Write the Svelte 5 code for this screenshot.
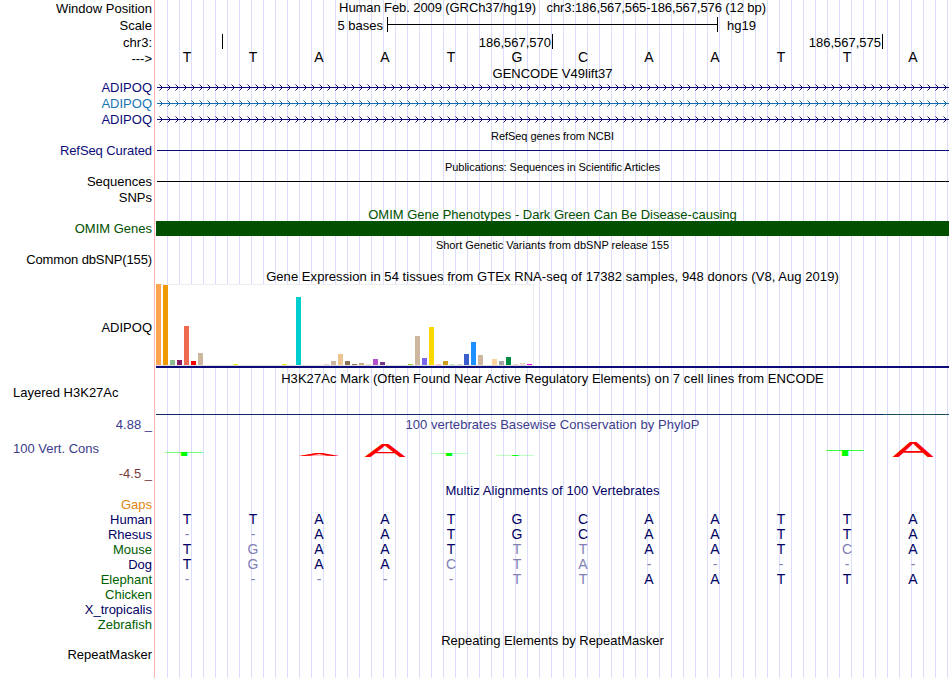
<script lang="ts">
  interface Row {
    kind: string;
    height: number;
    label?: string;
    labelColor?: string;
    labelBase?: number;
    labelTracking?: number;
    left?: boolean;
    title?: string;
    titleColor?: string;
    titleBase?: number;
    small?: boolean;
    tracking?: number;
    color?: string;
    bases?: string;
    ref?: string;
  }

  const NAVY = "#0c0c78";
  const GREEN = "#005000";
  const ALIGN = "#000064";
  const human = "TTAATGCAATTA";

  const header: Row[] = [
    {
      kind: "title",
      height: 16,
      label: "Window Position",
      labelBase: 13.5,
      title: "Human Feb. 2009 (GRCh37/hg19)   chr3:186,567,565-186,567,576 (12 bp)",
      titleBase: 12.5,
      tracking: -0.09,
    },
    { kind: "scale", height: 18, label: "Scale", labelBase: 14.5 },
    { kind: "ruler", height: 17, label: "chr3:", labelBase: 13.5 },
    { kind: "bases", height: 15, label: "--->", labelBase: 12, bases: human, ref: human, color: "#000" },
  ];

  const tracks: Row[] = [
    { kind: "title", height: 14, title: "GENCODE V49lift37", titleBase: 12 },
    { kind: "gene", height: 16, label: "ADIPOQ", labelColor: NAVY, color: NAVY, labelBase: 12 },
    { kind: "gene", height: 16, label: "ADIPOQ", labelColor: "#1874b4", color: "#1470b0", labelBase: 12 },
    { kind: "gene", height: 16, label: "ADIPOQ", labelColor: NAVY, color: NAVY, labelBase: 12 },
    { kind: "title", height: 15, title: "RefSeq genes from NCBI", titleBase: 12, small: true, tracking: -0.05 },
    {
      kind: "line",
      height: 15,
      label: "RefSeq Curated",
      labelColor: NAVY,
      color: NAVY,
      labelBase: 12,
      labelTracking: -0.08,
    },
    {
      kind: "title",
      height: 16,
      title: "Publications: Sequences in Scientific Articles",
      titleBase: 13,
      small: true,
      tracking: -0.06,
    },
    { kind: "line", height: 15, label: "Sequences", color: "#000", labelBase: 12 },
    { kind: "title", height: 16, label: "SNPs", labelBase: 13.5 },
    {
      kind: "title",
      height: 16,
      title: "OMIM Gene Phenotypes - Dark Green Can Be Disease-causing",
      titleColor: GREEN,
      titleBase: 14.5,
    },
    { kind: "block", height: 15, label: "OMIM Genes", labelColor: GREEN, color: GREEN, labelBase: 12 },
    { kind: "title", height: 16, title: "Short Genetic Variants from dbSNP release 155", titleBase: 13, small: true },
    { kind: "title", height: 15, label: "Common dbSNP(155)", labelBase: 12, labelTracking: -0.12 },
    {
      kind: "title",
      height: 17,
      title: "Gene Expression in 54 tissues from GTEx RNA-seq of 17382 samples, 948 donors (V8, Aug 2019)",
      titleBase: 14.5,
      tracking: 0.06,
    },
    { kind: "gtex", height: 84, label: "ADIPOQ", labelBase: 48.5 },
    {
      kind: "title",
      height: 18,
      title: "H3K27Ac Mark (Often Found Near Active Regulatory Elements) on 7 cell lines from ENCODE",
      titleBase: 15.5,
      tracking: 0.06,
    },
    { kind: "wiggle", height: 29, label: "Layered H3K27Ac", labelBase: 11, left: true },
    { kind: "phylop", height: 68 },
    {
      kind: "title",
      height: 14,
      title: "Multiz Alignments of 100 Vertebrates",
      titleColor: ALIGN,
      titleBase: 12,
      tracking: 0.09,
    },
    { kind: "title", height: 15, label: "Gaps", labelColor: "#e08410", labelBase: 12 },
    ...[
      ["Human", human],
      ["Rhesus", "--AATGCAATTA"],
      ["Mouse", "TGAATTTAATCA"],
      ["Dog", "TGAACTA-----"],
      ["Elephant", "-----TTAATTA"],
      ["Chicken", ""],
      ["X_tropicalis", ""],
      ["Zebrafish", ""],
    ].map(([label, bases]) => ({
      kind: "bases",
      height: 15,
      label,
      labelColor: ["Mouse", "Elephant", "Chicken", "Zebrafish"].includes(label) ? "#006000" : ALIGN,
      labelBase: 12,
      bases,
      ref: human,
      color: ALIGN,
    })),
    { kind: "title", height: 15, title: "Repeating Elements by RepeatMasker", titleBase: 13.5 },
    { kind: "title", height: 31, label: "RepeatMasker", labelBase: 12 },
  ];

  const rows = [...header, ...tracks];

  // one entry per tissue: [height, colour]
  const none: [number, string] = [0, "#fff"];
  const tissues: [number, string][] = [
    [81, "#ffa54f"], [80, "#ee9a00"], [5, "#8fbc8f"], [5, "#8b1c62"],
    [39, "#ee6a50"], [4, "#ff0000"], [12, "#cdb79e"], none, none, none, none,
    [1, "#eeee00"], none, none, none, none, none, none, [1, "#eeee00"], none,
    [68, "#00cdcd"], none, none, none, [1, "#e0d0d8"], [4, "#cdb79e"],
    [11, "#eec591"], [4, "#8b7355"], [1, "#8b7355"], [2, "#cdaa7d"],
    [1, "#eed5d2"], [6, "#b452cd"], [3, "#7a378b"], none, none, none,
    [1, "#9acd32"], [29, "#cdb79e"], [7, "#7a67ee"], [38, "#ffd700"],
    [1, "#ffb6c1"], [4, "#cd9b1d"], [1, "#b4eeb4"], [1, "#d9d9d9"],
    [11, "#3a5fcd"], [23, "#1e90ff"], [10, "#cdb79e"], none, [6, "#ffd39b"],
    [4, "#a6a6a6"], [8, "#008b45"], [1, "#eed5d2"], [2, "#eed5d2"], [1, "#ff00ff"],
  ];

  // conservation logo letters, stretched to their score
  const logo = [
    { base: "T", x: 28, top: 37, h: 4, w: 38, color: "#00ff00" },
    { base: "A", x: 163, top: 39, h: 2, w: 41, color: "#ff0000" },
    { base: "A", x: 229, top: 29, h: 13, w: 41, color: "#ff0000" },
    { base: "T", x: 293, top: 39, h: 2, w: 38, color: "#00ff00" },
    { base: "T", x: 359, top: 40, h: 1.1, w: 38, color: "#00ff00" },
    { base: "T", x: 689, top: 35, h: 6, w: 38, color: "#00ff00" },
    { base: "A", x: 757, top: 27, h: 15, w: 41, color: "#ff0000" },
  ];

  function logoTransform(l: (typeof logo)[number]): string {
    const em = l.base === "A" ? 0.664 : 0.57;
    return `translate(${l.x} ${l.top + l.h}) scale(${l.w / em / 20} ${l.h / 0.688 / 20})`;
  }

  const chevrons = Array.from({ length: 99 }, (_, i) => `M${3.5 + i * 8} 4.5l3 3l-3 3`).join("");

  // line box height that puts the text baseline at the given offset
  function lineHeight(base: number, size = 13): number {
    return 2 * (base - size * 0.3465);
  }
</script>

<main class="browser">
  {#each rows as row}
    <div class="row" style:height="{row.height}px">
      {#if row.kind === "phylop"}
        <div class="label axis">
          <span class="upper">4.88 _</span>
          <span class="name">100 Vert. Cons</span>
          <span class="lower">-4.5 _</span>
        </div>
      {:else}
        <div
          class="label"
          class:left={row.left}
          style:color={row.labelColor}
          style:letter-spacing="{row.labelTracking ?? 0}px"
          style:line-height="{lineHeight(row.labelBase ?? 12)}px"
        >
          {row.label ?? ""}
        </div>
      {/if}

      <div class="plot">
        {#if row.kind === "title"}
          <div
            class="title"
            class:small={row.small}
            style:color={row.titleColor}
            style:letter-spacing="{row.tracking ?? 0}px"
            style:line-height="{lineHeight(row.titleBase ?? 12, row.small ? 11 : 13)}px"
          >
            {row.title ?? ""}
          </div>
        {:else if row.kind === "scale"}
          <div class="scale">
            <span class="size">5 bases</span>
            <span class="bar"></span>
            <span>hg19</span>
          </div>
        {:else if row.kind === "ruler"}
          <div class="ruler">
            <span></span>
            <span>186,567,570</span>
            <span>186,567,575</span>
          </div>
        {:else if row.kind === "bases"}
          <div class="bases" class:top={row.color === "#000"} style:color={row.color}>
            {#each (row.bases ?? "").split("") as base, i}
              <span class:diff={base !== row.ref?.[i]}>{base}</span>
            {/each}
          </div>
        {:else if row.kind === "gene"}
          <svg width="793" height="16" style:color={row.color}>
            <path d="M1 7.5H793" stroke="currentColor" shape-rendering="crispEdges" />
            <path d={chevrons} fill="none" stroke="currentColor" stroke-width="1" />
          </svg>
        {:else if row.kind === "line"}
          <div class="line" style:background={row.color}></div>
        {:else if row.kind === "block"}
          <div class="block" style:background={row.color}></div>
        {:else if row.kind === "gtex"}
          <div class="gtex">
            {#each tissues as [h, color]}
              <span style:height="{h}px" style:background={color}></span>
            {/each}
          </div>
          <div class="model"></div>
        {:else if row.kind === "wiggle"}
          <div class="wiggle"></div>
        {:else if row.kind === "phylop"}
          <div class="phylop">
            <div class="title">100 vertebrates Basewise Conservation by PhyloP</div>
            <svg width="793" height="68">
              {#each logo as l}
                <text transform={logoTransform(l)} text-anchor="middle" font-size="20" fill={l.color}>{l.base}</text>
              {/each}
            </svg>
          </div>
        {/if}
      </div>
    </div>
  {/each}
</main>

<style>
  :global(body) {
    margin: 0;
    background: #fff;
  }

  .browser {
    width: 949px;
    height: 678px;
    overflow: hidden;
    font-family: "Liberation Sans", Arial, Helvetica, sans-serif;
    font-size: 13px;
    color: #000;
    background:
      linear-gradient(#ffb4b4, #ffb4b4) 154px 0 / 1px 100% no-repeat,
      repeating-linear-gradient(90deg, #dcdcff 0 1px, transparent 1px 12px) 167px 0 / 782px 100% no-repeat;
  }

  .row {
    display: grid;
    grid-template-columns: 152px 793px;
    column-gap: 4px;
  }

  .label {
    text-align: right;
    white-space: pre;
  }

  .label.left {
    padding-left: 13px;
    text-align: left;
  }

  .axis {
    display: flex;
    flex-direction: column;
    gap: 10px;
    line-height: 15px;
    padding-top: 2px;
  }

  .upper {
    color: #3c3c8c;
  }

  .name {
    margin-top: -1px;
    padding-left: 13px;
    text-align: left;
    color: #3c3c8c;
  }

  .lower {
    color: #783c3c;
  }

  .title {
    text-align: center;
    white-space: pre;
  }

  .title.small {
    font-size: 11px;
  }

  .scale {
    display: flex;
    line-height: 19px;
  }

  .size {
    width: 227px;
    margin-right: 4px;
    text-align: right;
  }

  .bar {
    box-sizing: border-box;
    width: 331px;
    height: 15px;
    margin: 1px 9px 0 0;
    border: solid #000;
    border-width: 0 1px;
    background: linear-gradient(#000, #000) 0 7px / 100% 1px no-repeat;
  }

  .ruler {
    display: grid;
    grid-template-columns: 67px 330px 330px;
    text-align: right;
    line-height: 18px;
  }

  .ruler span {
    height: 15px;
    padding-right: 1px;
    border-right: 1px solid #000;
  }

  .bases {
    display: grid;
    grid-template-columns: repeat(12, 66px);
    margin-left: -2px;
    text-align: center;
    font-size: 14px;
    line-height: 15px;
  }

  .bases.top {
    line-height: 13px;
  }

  .diff {
    color: #8080b4;
  }

  svg {
    display: block;
  }

  .line {
    height: 1px;
    margin: 7px 0 0 1px;
  }

  .block {
    height: 15px;
  }

  .gtex {
    box-sizing: border-box;
    display: flex;
    align-items: flex-end;
    gap: 2px;
    width: 378px;
    height: 82px;
    border: solid #eee;
    border-width: 1px 1px 1px 0;
    border-bottom-color: #ddd;
    background: #fff;
  }

  .gtex span {
    flex: 0 0 5px;
  }

  .model {
    height: 2px;
    background: #0c0c78;
  }

  .wiggle {
    height: 1px;
    margin-top: 28px;
    background: linear-gradient(90deg, #14286e 727px, #1e5064 727px);
  }

  .phylop {
    display: grid;
  }

  .phylop > * {
    grid-area: 1 / 1;
  }

  .phylop .title {
    line-height: 19px;
    letter-spacing: 0.04px;
    color: #3c3c8c;
  }
</style>
